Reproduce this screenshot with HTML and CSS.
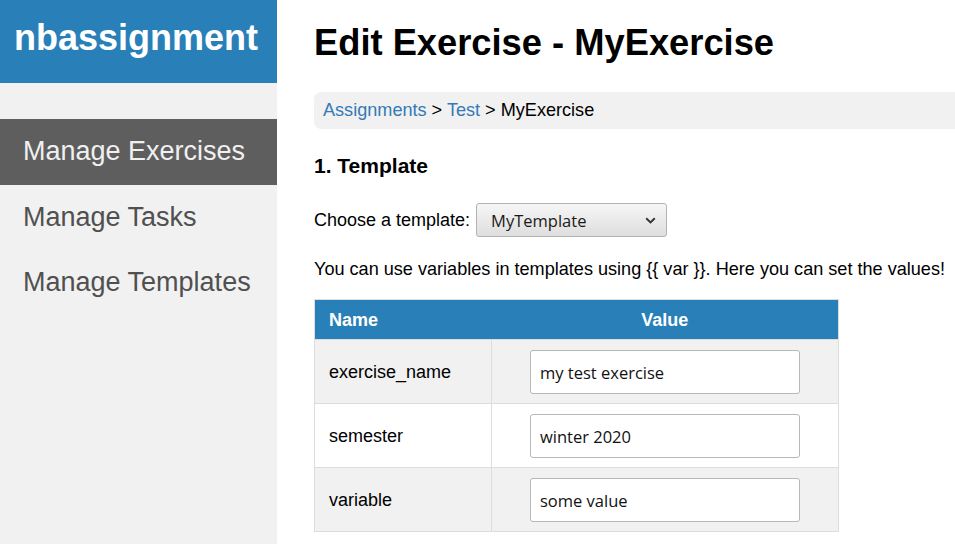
FILE: index.html
```html
<!DOCTYPE html>
<html lang="en">
<head>
<meta charset="utf-8">
<title>Edit Exercise - MyExercise</title>
<link rel="stylesheet" href="styles.css">
</head>
<body>
<div class="layout">
  <aside class="sidebar">
    <div class="brand">nbassignment</div>
    <nav class="menu">
      <a class="menu-item active" href="#">Manage Exercises</a>
      <a class="menu-item" href="#">Manage Tasks</a>
      <a class="menu-item" href="#">Manage Templates</a>
    </nav>
  </aside>
  <main class="main">
    <h1 class="title">Edit Exercise - MyExercise</h1>
    <div class="breadcrumb">
      <a href="#">Assignments</a> &gt; <a href="#">Test</a> &gt; MyExercise
    </div>
    <h3 class="section">1. Template</h3>
    <div class="choose">
      <label for="tpl">Choose a template:</label>
      <div class="select-wrap">
        <select id="tpl" class="select">
          <option>MyTemplate</option>
        </select>
        <svg class="chevron" width="11" height="7" viewBox="0 0 11 7"><path d="M1.2 1.2 L5.5 5.4 L9.8 1.2" fill="none" stroke="#333" stroke-width="1.9"/></svg>
      </div>
    </div>
    <p class="intro">You can use variables in templates using {{ var }}. Here you can set the values!</p>
    <table class="vars">
      <thead>
        <tr><th class="col-name">Name</th><th class="col-value">Value</th></tr>
      </thead>
      <tbody>
        <tr><td class="name">exercise_name</td><td class="value"><input class="field" type="text" value="my test exercise"></td></tr>
        <tr><td class="name">semester</td><td class="value"><input class="field" type="text" value="winter 2020"></td></tr>
        <tr><td class="name">variable</td><td class="value"><input class="field" type="text" value="some value"></td></tr>
      </tbody>
    </table>
  </main>
</div>
</body>
</html>
```
FILE: styles.css
```css
* { box-sizing: border-box; }
html, body {
  margin: 0;
  padding: 0;
  height: 100%;
  overflow: hidden;
  background: #fff;
}
body {
  font-family: "Liberation Sans", Arial, sans-serif;
  font-size: 18px;
  color: #000;
}
.layout {
  display: flex;
  height: 544px;
}
.sidebar {
  flex: 0 0 277px;
  background: #f1f1f1;
  display: flex;
  flex-direction: column;
}
.brand {
  height: 83px;
  background: #2980b9;
  color: #fff;
  font-weight: bold;
  font-size: 36px;
  line-height: 41px;
  padding: 17px 0 0 14px;
}
.menu {
  margin-top: 36px;
  display: flex;
  flex-direction: column;
}
.menu-item {
  display: block;
  font-size: 27px;
  line-height: 31.7px;
  padding: 17px 23px;
  color: #505050;
  text-decoration: none;
}
.menu-item.active {
  background: #5e5e5e;
  color: #f0f0f0;
}
.main {
  flex: 1;
  padding-left: 37px;
  min-width: 0;
}
.title {
  font-size: 36.3px;
  font-weight: bold;
  line-height: 41px;
  margin: 22px 0 0 0;
}
.breadcrumb {
  margin: 29px -40px 0 0;
  height: 37px;
  line-height: 37px;
  padding: 0 9px;
  background: #f1f1f1;
  border-radius: 7px;
  white-space: nowrap;
  font-size: 18.1px;
}
.breadcrumb a {
  color: #337ab7;
  text-decoration: none;
}
.section {
  font-size: 21px;
  font-weight: bold;
  line-height: 24px;
  margin: 25px 0 0;
}
.choose {
  margin-top: 25px;
  display: flex;
  align-items: center;
  gap: 6px;
}
.select-wrap {
  position: relative;
  width: 191px;
  height: 34px;
}
.select {
  appearance: none;
  -webkit-appearance: none;
  width: 100%;
  height: 100%;
  margin: 0;
  border: 1px solid #b3b3b3;
  border-radius: 3px;
  background: linear-gradient(#f6f6f6, #dedede);
  font-family: "Open Sans", "Noto Sans", sans-serif;
  font-size: 16.5px;
  color: #1a1a1a;
  padding: 0 0 0 14px;
}
.chevron {
  position: absolute;
  right: 11px;
  top: 14px;
  pointer-events: none;
}
.intro {
  margin: 22px 0 0;
  line-height: 21px;
  white-space: nowrap;
  font-size: 18.1px;
}
.vars {
  margin-top: 19px;
  width: 525px;
  border-collapse: collapse;
  border: 1px solid #ddd;
}
.vars th {
  background: #2980b9;
  color: #fff;
  font-weight: bold;
  height: 40px;
  padding: 0 14px;
  line-height: 20px;
}
.col-name {
  width: 177px;
  text-align: left;
}
.col-value {
  text-align: center;
}
.vars td {
  border: 1px solid #ddd;
  padding: 10px 14px 9px;
}
.vars tbody tr:nth-child(odd) td {
  background: #f1f1f1;
}
.vars tbody tr:nth-child(even) td {
  background: #fff;
}
.value {
  text-align: center;
}
.field {
  width: 270px;
  height: 44px;
  margin: 0;
  display: inline-block;
  vertical-align: middle;
  border: 1px solid #b8b8b8;
  border-radius: 3px;
  background: #fff;
  font-family: "Open Sans", "Noto Sans", sans-serif;
  font-size: 16.5px;
  color: #111;
  padding: 0 9px;
}
```
